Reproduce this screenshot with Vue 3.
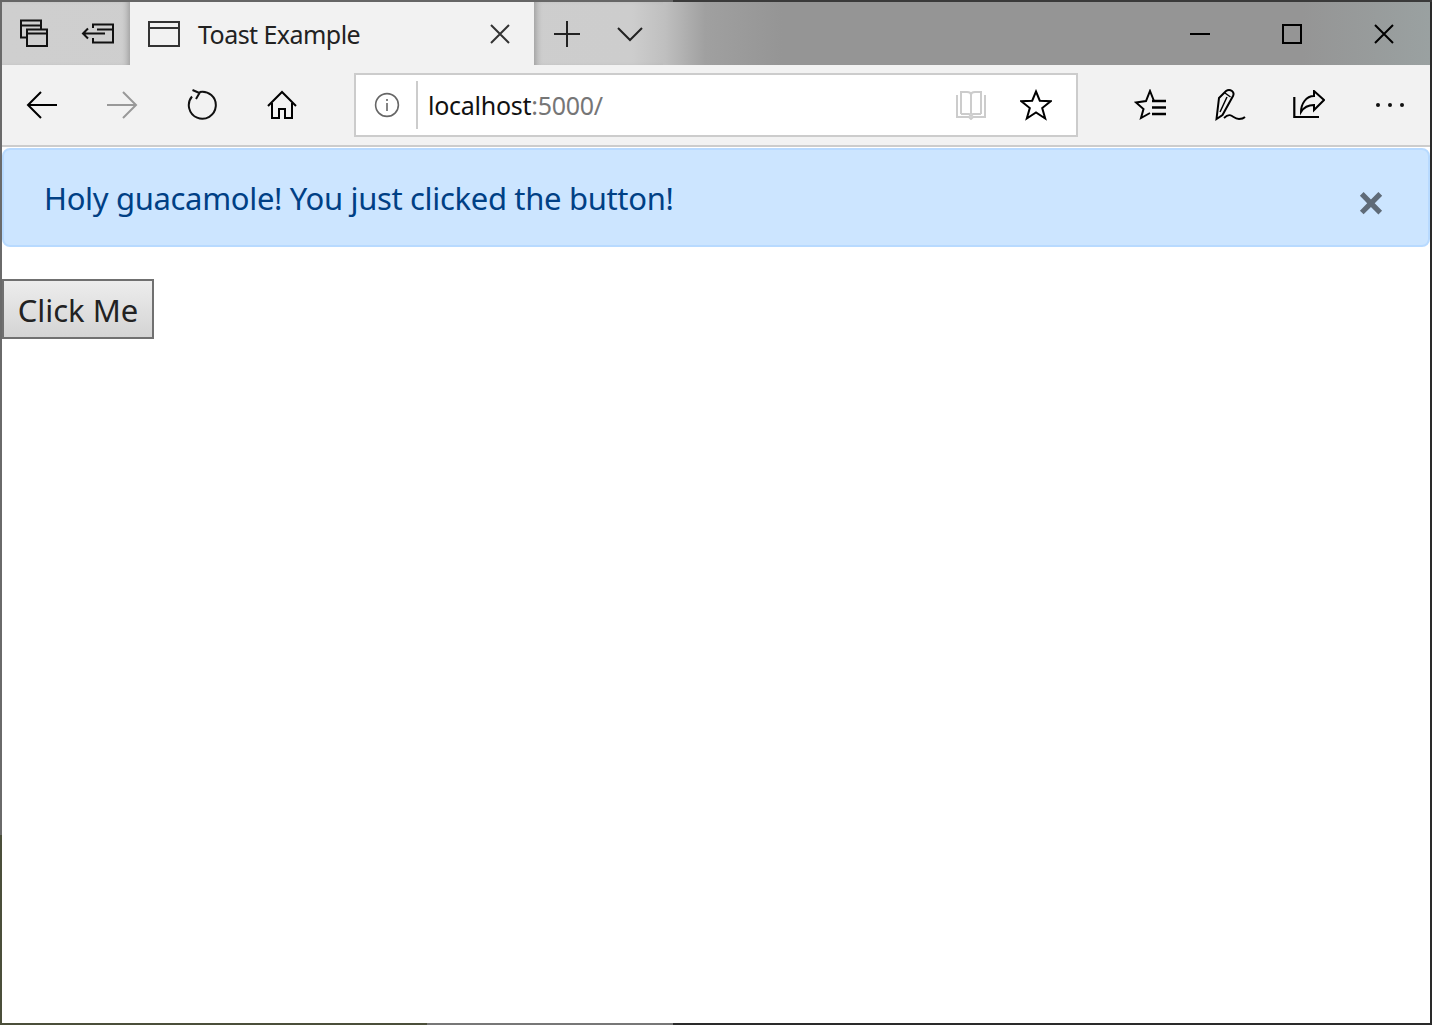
<template>
  <div class="frame">
    <div class="titlebar">
      <div class="tab-tools">
        <button type="button" class="tool-btn">
          <svg width="32" height="32" viewBox="0 0 32 32" fill="none" stroke="#111" stroke-width="2">
            <path d="M9 19.500H3v-17h20v9" />
            <path d="M3 7.500h20" />
            <rect x="9" y="11.500" width="20" height="16.500" />
            <path d="M9 15.500h20" />
          </svg>
        </button>
        <button type="button" class="tool-btn">
          <svg width="36" height="32" viewBox="0 0 36 32" fill="none" stroke="#111" stroke-width="2">
            <path d="M13 10V6.500h20v18H13V20" />
            <path d="M17 11.500h16" />
            <path d="M3 15.500h22M8 10.500l-5 5 5 5" />
          </svg>
        </button>
      </div>
      <div class="tab">
        <svg class="tab-icon" width="32" height="26" viewBox="0 0 32 26" fill="none" stroke="#333" stroke-width="2">
          <rect x="1" y="1" width="30" height="24" />
          <path d="M1 7h30" />
        </svg>
        <span class="tab-title">Toast Example</span>
        <svg class="tab-close" width="22" height="22" viewBox="0 0 22 22" fill="none" stroke="#333" stroke-width="2">
          <path d="M2 2l18 18M20 2L2 20" />
        </svg>
      </div>
      <div class="tab-actions">
        <svg width="28" height="28" viewBox="0 0 28 28" fill="none" stroke="#222" stroke-width="2">
          <path d="M1 14h26M14 1v26" />
        </svg>
        <svg class="chevron" width="26" height="16" viewBox="0 0 26 16" fill="none" stroke="#222" stroke-width="2">
          <path d="M1 2l12 12L25 2" />
        </svg>
      </div>
      <div class="win-controls">
        <button type="button" class="win-btn">
          <svg width="22" height="22" viewBox="0 0 22 22" fill="none" stroke="#000" stroke-width="2"><path d="M1 11h20" /></svg>
        </button>
        <button type="button" class="win-btn">
          <svg width="22" height="22" viewBox="0 0 22 22" fill="none" stroke="#000" stroke-width="2"><rect x="2" y="2" width="18" height="18" /></svg>
        </button>
        <button type="button" class="win-btn">
          <svg width="22" height="22" viewBox="0 0 22 22" fill="none" stroke="#000" stroke-width="2"><path d="M2 2l18 18M20 2L2 20" /></svg>
        </button>
      </div>
    </div>

    <div class="toolbar">
      <div class="nav-group">
        <button type="button" class="nav-btn">
          <svg width="32" height="32" viewBox="0 0 32 32" fill="none" stroke="#000" stroke-width="2"><path d="M2 16h29M15 3L2 16l13 13" /></svg>
        </button>
        <button type="button" class="nav-btn">
          <svg width="32" height="32" viewBox="0 0 32 32" fill="none" stroke="#999" stroke-width="2"><path d="M1 16h29M17 3l13 13-13 13" /></svg>
        </button>
        <button type="button" class="nav-btn">
          <svg width="32" height="32" viewBox="0 0 32 32" fill="none" stroke="#111" stroke-width="2">
            <path d="M6 7.500A13.500 13.500 0 1 0 13.500 3" />
            <path d="M6.500 1l7 3-3.500 6" />
          </svg>
        </button>
        <button type="button" class="nav-btn">
          <svg width="32" height="32" viewBox="0 0 32 32" fill="none" stroke="#000" stroke-width="2"><path d="M2 17L16 3l14 14" /><path d="M6 14v15h7v-9h6v9h7V14" /></svg>
        </button>
      </div>

      <div class="address">
        <svg class="info-icon" width="26" height="26" viewBox="0 0 26 26" fill="none" stroke="#666" stroke-width="1.6">
          <circle cx="13" cy="13" r="11.400" />
          <path d="M13 11v8M13 7v2" />
        </svg>
        <span class="address-sep"></span>
        <span class="url">localhost<span class="url-dim">:5000/</span></span>
        <svg class="book-icon" width="32" height="30" viewBox="0 0 32 30" fill="none" stroke="#ccc" stroke-width="2">
          <path d="M2 5v22h12l2 2 2-2h12V5" />
          <path d="M6 24V2h6c2 0 4 1 4 3v19" />
          <path d="M26 24V2h-6c-2 0-4 1-4 3" />
          <path d="M6 24h8l2 2 2-2h8" />
        </svg>
        <svg class="star-icon" width="32" height="32" viewBox="0 0 32 32" fill="none" stroke="#000" stroke-width="2" stroke-miterlimit="10">
          <path d="M16 2.500l3.800 9.200 10.900.5-8.500 6.800 3 10.500-9.200-6-9.200 6 3-10.500-8.500-6.800 10.900-.5z" />
        </svg>
      </div>

      <div class="hub-group">
        <button type="button" class="hub-btn">
          <svg width="34" height="32" viewBox="0 0 34 32" fill="none" stroke="#000" stroke-width="2" stroke-miterlimit="10">
            <path d="M20 12L16 2l-4 10-10 1.500 7.500 6.500L7 29l9-5" />
            <path d="M18 12h14M18 18.500h14M18 25h14" stroke-width="2.400" />
          </svg>
        </button>
        <button type="button" class="hub-btn">
          <svg width="32" height="34" viewBox="0 0 32 34" fill="none" stroke="#000" stroke-width="2">
            <path d="M2.500 31L5 10 12 3q3-2 6 0 2.500 2 1 5L8.500 27z" />
            <path d="M11 5l5.500 4M6 24l7-15" stroke-width="1.500" />
            <path d="M10 30c3-3 5-4 8-2s4 3 7 3 4 0 6-2" stroke-width="1.800" />
          </svg>
        </button>
        <button type="button" class="hub-btn">
          <svg width="32" height="30" viewBox="0 0 32 30" fill="none" stroke="#000" stroke-width="2">
            <path d="M1.300 7v20H26" stroke-width="2.200" />
            <path d="M21 1l10 9-10 10v-5c-6 0-10 2-13 7 0-8 5-16 13-16z" />
          </svg>
        </button>
        <button type="button" class="hub-btn">
          <svg width="30" height="6" viewBox="0 0 30 6" fill="#111">
            <circle cx="3" cy="3" r="2" /><circle cx="15" cy="3" r="2" /><circle cx="27" cy="3" r="2" />
          </svg>
        </button>
      </div>
    </div>
    <div class="toolbar-rule"></div>

    <div class="page">
      <div v-if="showAlert" class="alert">
        <span>Holy guacamole! You just clicked the button!</span>
        <button type="button" class="alert-close" @click="showAlert = false">×</button>
      </div>
      <button type="button" class="click-btn" @click="showAlert = true">Click Me</button>
    </div>
  </div>
</template>

<script setup>
import { ref } from 'vue'

const showAlert = ref(true)
</script>

<style>
html,
body {
  margin: 0;
  overflow: hidden;
}
</style>

<style scoped>
.frame {
  box-sizing: border-box;
  width: 1432px;
  height: 1025px;
  padding: 2px;
  display: flex;
  flex-direction: column;
  background:
    linear-gradient(90deg, #666 0 673px, #3a3a3a 673px) top / 100% 2px no-repeat,
    linear-gradient(90deg, #4b4f3a 0 427px, #777 427px 673px, #2a2a2a 673px) bottom / 100% 2px no-repeat,
    linear-gradient(180deg, #6a6a6a 0 835px, #4b4f3a 835px) left / 2px 100% no-repeat,
    #2a2a2a;
  font-family: "Noto Sans", "Open Sans", sans-serif;
}

button {
  padding: 0;
  border: 0;
  background: transparent;
  font-family: inherit;
}

.titlebar {
  height: 63px;
  display: flex;
  background: linear-gradient(90deg, #cfcfcf 0, #cdcdcd 630px, #bfbfbf 663px, #a0a0a0 703px, #959595 780px, #959595 1300px, #9aa1a1 100%);
}

.tab-tools {
  width: 128px;
  display: flex;
  box-shadow: inset -6px 0 6px -4px rgba(0, 0, 0, 0.25);
}

.tool-btn {
  width: 64px;
  display: flex;
  align-items: center;
  justify-content: center;
}

.tab {
  width: 404px;
  display: flex;
  align-items: center;
  padding-left: 18px;
  box-sizing: border-box;
  background: #f2f2f2;
}

.tab-title {
  margin-left: 18px;
  font-size: 25px;
  letter-spacing: -0.55px;
  color: #222;
}

.tab-close {
  margin-left: auto;
  margin-right: 23px;
}

.tab-actions {
  display: flex;
  align-items: center;
  padding-left: 19px;
  box-shadow: inset 6px 0 6px -4px rgba(0, 0, 0, 0.25);
}

.chevron {
  margin-left: 36px;
  margin-right: 20px;
}

.win-controls {
  margin-left: auto;
  display: flex;
  align-items: center;
}

.win-btn {
  width: 92px;
  display: flex;
  justify-content: center;
}

.toolbar {
  height: 80px;
  display: flex;
  align-items: center;
  background: #f2f2f2;
}

.toolbar-rule {
  height: 2px;
  background: #ccc;
}

.nav-group {
  display: flex;
  width: 352px;
}

.nav-btn {
  width: 80px;
  height: 64px;
  display: flex;
  align-items: center;
  justify-content: center;
}

.address {
  box-sizing: border-box;
  width: 724px;
  height: 64px;
  display: flex;
  align-items: center;
  border: 2px solid #ccc;
  background: #fff;
}

.info-icon {
  margin-left: 18px;
}

.address-sep {
  width: 2px;
  height: 48px;
  margin-left: 16px;
  background: #ccc;
}

.url {
  margin-left: 10px;
  font-size: 25px;
  letter-spacing: -0.27px;
  color: #111;
}

.url-dim {
  color: #767676;
}

.book-icon {
  margin-left: auto;
}

.star-icon {
  margin-left: 33px;
  margin-right: 24px;
}

.hub-group {
  display: flex;
  margin-left: 33px;
}

.hub-btn {
  width: 79px;
  height: 64px;
  display: flex;
  align-items: center;
  justify-content: center;
}

.hub-btn:last-child {
  box-sizing: border-box;
  padding-left: 4px;
}

.page {
  flex: 1;
  background: #fff;
  padding-top: 1px;
}

.alert {
  box-sizing: border-box;
  height: 99px;
  margin-bottom: 32px;
  padding: 1px 40px 0 40px;
  display: flex;
  align-items: center;
  justify-content: space-between;
  border: 2px solid #b8daff;
  border-radius: 8px;
  background: #cce5ff;
  color: #004085;
  font-size: 31px;
  letter-spacing: -0.33px;
}

.alert-close {
  width: 34px;
  margin-top: 7px;
  color: #5f6b78;
  font-size: 50px;
  font-weight: 700;
  line-height: 1;
}

.click-btn {
  display: block;
  box-sizing: border-box;
  width: 152px;
  height: 60px;
  padding-top: 1px;
  border: 2px solid #707070;
  background: linear-gradient(180deg, #ededed, #d4d4d4);
  color: #222;
  font-size: 31px;
}
</style>
